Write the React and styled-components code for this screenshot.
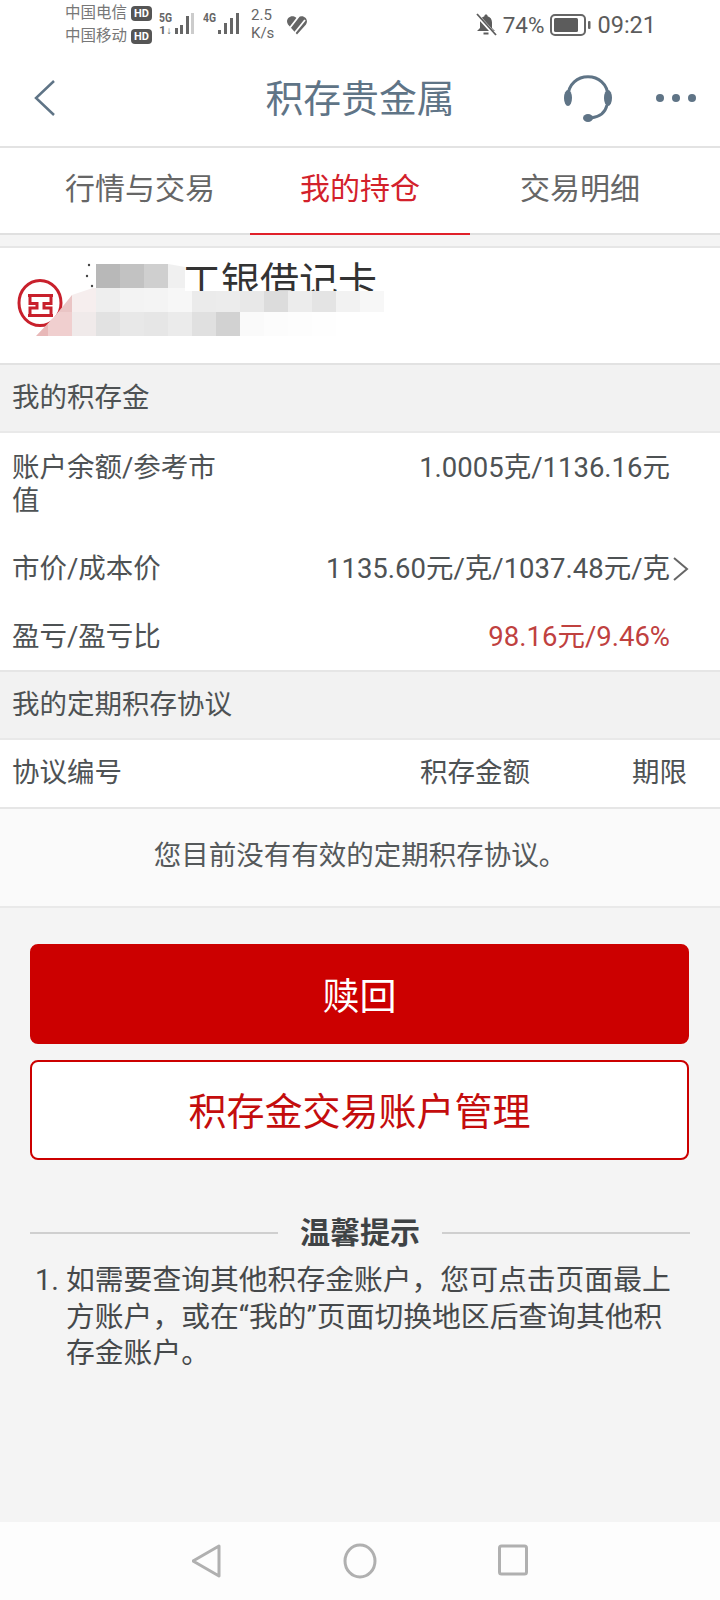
import React from 'react';
import styled, { createGlobalStyle } from 'styled-components';

const GlobalStyle = createGlobalStyle`
  html, body {
    margin: 0;
    padding: 0;
    background: #f4f4f4;
  }
  body {
    font-family: Roboto, "Noto Sans CJK SC", sans-serif;
  }
  * {
    box-sizing: border-box;
  }
`;

const Page = styled.div`
  width: 720px;
  height: 1600px;
  display: flex;
  flex-direction: column;
  overflow: hidden;
  background: #f4f4f4;
`;

const StatusBar = styled.div`
  height: 50px;
  padding: 0 64px 0 65px;
  display: flex;
  align-items: center;
  justify-content: space-between;
  background: #fff;
  color: #666;
`;

const StatusGroup = styled.div`
  display: flex;
  align-items: center;
`;

const Carriers = styled.div`
  display: flex;
  flex-direction: column;
  gap: 4px;
  margin-right: 7px;
`;

const Carrier = styled.div`
  display: flex;
  align-items: center;
  gap: 4px;
  height: 19px;
  font-size: 15.5px;
  line-height: 19px;
  color: #777;
`;

const HdBadge = styled.span`
  width: 21px;
  height: 15px;
  border-radius: 4px;
  background: #555;
  color: #fff;
  font-size: 11px;
  font-weight: 700;
  line-height: 15px;
  text-align: center;
`;

const SignalSlot = styled.div`
  display: flex;
  margin-left: ${p => p.$gap || 0}px;
`;

const Speed = styled.div`
  width: 35px;
  margin: -2px 0 0 10px;
  font-size: 15px;
  line-height: 18px;
  color: #666;
`;

const Percent = styled.span`
  margin: 0 6px;
  font-size: 22.5px;
  color: #5c5c5c;
`;

const Clock = styled.span`
  margin-left: 6px;
  font-size: 23.5px;
  color: #5c5c5c;
`;

const NavBar = styled.div`
  height: 98px;
  padding: 0 24px;
  display: grid;
  grid-template-columns: 1fr auto 1fr;
  align-items: center;
  background: #fff;
  border-bottom: 2px solid #e3e3e3;
`;

const BackSlot = styled.div`
  padding-left: 8px;
  display: flex;
`;

const NavTitle = styled.div`
  padding-top: 2px;
  font-size: 37.8px;
  line-height: 50px;
  color: #5f7486;
`;

const NavActions = styled.div`
  display: flex;
  align-items: center;
  justify-content: flex-end;
  gap: 43px;
`;

const Tabs = styled.div`
  height: 87px;
  padding: 0 30px;
  display: flex;
  background: #fff;
  border-bottom: 2px solid #e0e0e0;
`;

const Tab = styled.div`
  flex: 1;
  margin-bottom: -2px;
  padding-bottom: 9px;
  display: flex;
  align-items: center;
  justify-content: center;
  font-size: 30px;
  color: ${p => (p.$active ? '#d3212b' : '#666')};
  border-bottom: 2px solid ${p => (p.$active ? '#e0202a' : 'transparent')};
`;

const AccountCard = styled.div`
  position: relative;
  height: 119px;
  margin-top: 11px;
  padding-left: 182px;
  background: #fff;
  border-top: 2px solid #e6e6e6;
  border-bottom: 2px solid #e2e2e2;
  overflow: hidden;
`;

const AccountName = styled.div`
  height: 44px;
  margin-top: 12px;
  font-size: 39px;
  line-height: 44px;
  color: #333;
`;

const BankLogo = styled.svg`
  position: absolute;
  left: 17px;
  top: 30px;
`;

const Mosaic = styled.div`
  position: absolute;
  left: 24px;
  top: 16px;
  display: grid;
  grid-template-columns: repeat(16, 24px);
  grid-auto-rows: 24px;
  filter: blur(0.7px);
  clip-path: polygon(72px 0, 144px 0, 161px 3px, 161px 27px, 100% 27px, 100% 100%, 12px 100%, 31px 52px, 48px 31px, 72px 23px);
`;

const MosaicTile = styled.div`
  background: ${p => p.$color};
`;

const MosaicResidue = styled.svg`
  position: absolute;
  left: 84px;
  top: 14px;
`;

const SectionHeader = styled.div`
  height: 68px;
  padding: 0 0 6px 12px;
  display: flex;
  align-items: center;
  font-size: 27.5px;
  color: #4e5254;
  background: #f2f2f2;
  border-bottom: 2px solid #e9e9e9;
`;

const InfoPanel = styled.div`
  background: #fff;
  border-bottom: 2px solid #e6e6e6;
`;

const InfoRow = styled.div`
  height: ${p => p.$height}px;
  padding: ${p => p.$top}px 50px 0 12px;
  display: flex;
  justify-content: space-between;
  font-size: 27.5px;
  line-height: 33px;
  color: #4e5254;
`;

const InfoLabel = styled.div`
  width: 205px;
`;

const InfoValue = styled.div`
  position: relative;
  color: ${p => p.$color || '#4e5254'};
`;

const Chevron = styled.svg`
  position: absolute;
  left: 100%;
  top: 5px;
  margin-left: 2px;
`;

const TableHead = styled.div`
  height: 69px;
  padding: 0 0 8px 12px;
  display: grid;
  grid-template-columns: 408px 212px auto;
  align-items: center;
  font-size: 27.5px;
  color: #4e5254;
  background: #fff;
  border-bottom: 2px solid #e6e6e6;
`;

const EmptyRow = styled.div`
  height: 99px;
  padding-bottom: 10px;
  display: flex;
  align-items: center;
  justify-content: center;
  font-size: 27.5px;
  color: #55595b;
  background: #fafafa;
  border-bottom: 2px solid #e9e9e9;
`;

const Actions = styled.div`
  padding: 36px 31px 0 30px;
  display: flex;
  flex-direction: column;
  gap: 16px;
`;

const Button = styled.div`
  height: 100px;
  padding-bottom: ${p => (p.$solid ? 0 : 4)}px;
  display: flex;
  align-items: center;
  justify-content: center;
  border-radius: 8px;
  border: 2px solid #cc0000;
  background: ${p => (p.$solid ? '#cc0000' : '#fff')};
  color: ${p => (p.$solid ? '#fff' : '#c40d0d')};
  font-size: ${p => (p.$solid ? '37px' : '38px')};
`;

const Hint = styled.div`
  flex: 1;
  padding: 51px 30px 0;
`;

const HintTitle = styled.div`
  display: flex;
  align-items: center;
  gap: 22px;
  font-size: 30px;
  line-height: 44px;
  font-weight: 700;
  color: #3f4345;

  &::before,
  &::after {
    content: '';
    flex: 1;
    height: 2px;
    background: #cfcfcf;
  }
`;

const HintItem = styled.div`
  position: relative;
  margin-top: 7px;
  padding: 0 16px 0 36px;
  font-size: 28.8px;
  line-height: 36.5px;
  color: #46494b;
`;

const HintIndex = styled.span`
  position: absolute;
  left: 5px;
  top: 0;
`;

const BottomBar = styled.div`
  height: 78px;
  padding-top: 21px;
  display: flex;
  align-items: flex-start;
  justify-content: center;
  gap: 121px;
  background: #fdfdfd;
`;

const signalIcons = {
  '5G': { bars: [[16, 6], [21, 9], [27, 18]], last: [32, 21, '#ccc'], sub: '1↓' },
  '4G': { bars: [[15, 4], [21, 11], [27, 16]], last: [33, 21, '#666'] },
};

const SignalBars = ({ label }) => {
  const { bars, last, sub } = signalIcons[label];
  return (
    <svg width="38" height="28" viewBox="0 0 38 28">
      <text x="0" y="11" fontSize="12" fontWeight="700" fill="#666" fontFamily="Roboto" textLength="13" lengthAdjust="spacingAndGlyphs">{label}</text>
      {sub && <text x="0" y="23" fontSize="10" fontWeight="700" fill="#666" fontFamily="Roboto" textLength="13" lengthAdjust="spacingAndGlyphs">{sub}</text>}
      {bars.map(([x, h]) => (
        <rect key={x} x={x} y={23 - h} width="3" height={h} fill="#666" />
      ))}
      <rect x={last[0]} y={23 - last[1]} width="3" height={last[1]} fill={last[2]} />
    </svg>
  );
};

const HeartIcon = () => (
  <svg width="22" height="20" viewBox="0 0 22 20">
    <path d="M11 19.500 L2 9.500 C-1.500 4 5 -1.500 10 2.500 L11 3.500 L12 2.500 C17 -1.500 23.500 4 20 9.500 Z" fill="#666" />
    <path d="M3 14 L13 1 M8.500 18 L19 5" stroke="#fff" strokeWidth="1.800" />
  </svg>
);

const BellIcon = () => (
  <svg width="22" height="24" viewBox="0 0 22 24">
    <path d="M11 1.500c-1 0-1.600.7-1.600 1.700C6.400 4 5 6.500 5 9.500V15l-3 3h18l-3-3V9.500c0-3-1.400-5.500-4.400-6.300 0-1-.6-1.700-1.600-1.700z" fill="#5c5c5c" />
    <path d="M8.500 20.500h5" stroke="#5c5c5c" strokeWidth="2" />
    <path d="M2 2l18 20" stroke="#fff" strokeWidth="3.500" />
    <path d="M2 1l19 21" stroke="#5c5c5c" strokeWidth="1.800" />
  </svg>
);

const BatteryIcon = () => (
  <svg width="41" height="22" viewBox="0 0 41 22">
    <rect x="1" y="1" width="34" height="20" rx="4" fill="none" stroke="#666" strokeWidth="2" />
    <rect x="4" y="4" width="24" height="14" rx="1.500" fill="#5c5c5c" />
    <rect x="38" y="7" width="2.500" height="8" rx="1" fill="#666" />
  </svg>
);

const BackIcon = () => (
  <svg width="24" height="38" viewBox="0 0 24 38">
    <path d="M22 2 L4 19 L22 36" fill="none" stroke="#5f7486" strokeWidth="2.500" />
  </svg>
);

const HeadsetIcon = () => (
  <svg width="50" height="50" viewBox="0 0 50 50">
    <path d="M5 24 C5 -3 45 -3 45 24" fill="none" stroke="#5f7486" strokeWidth="3" />
    <ellipse cx="5" cy="25" rx="4" ry="8" fill="#5f7486" />
    <ellipse cx="45" cy="25" rx="4" ry="8" fill="#5f7486" />
    <path d="M44 32 C42 41 36 44 28 45" fill="none" stroke="#5f7486" strokeWidth="3" />
    <ellipse cx="25" cy="45" rx="5" ry="4" fill="#5f7486" />
  </svg>
);

const MoreIcon = () => (
  <svg width="40" height="10" viewBox="0 0 40 10">
    <circle cx="4" cy="5" r="4" fill="#5f7486" />
    <circle cx="20" cy="5" r="4" fill="#5f7486" />
    <circle cx="36" cy="5" r="4" fill="#5f7486" />
  </svg>
);

const IcbcLogo = () => (
  <BankLogo width="46" height="50" viewBox="0 0 46 50">
    <ellipse cx="23" cy="25" rx="21" ry="22.500" fill="none" stroke="#c8202c" strokeWidth="3" />
    <path d="M11 17.500H36M11 37.500H36M13 17.500V25.500H20V30H13V37.500M34 17.500V25.500H27V30H34V37.500" fill="none" stroke="#c8202c" strokeWidth="3" />
  </BankLogo>
);

const mosaicRows = [
  [null, null, null, '#b8b8b8', '#c2c2c2', '#cfcfcf', '#f0f0f0'],
  [null, '#eac5c5', '#f6eeee', '#eeeeee', '#f3f3f3', '#f4f4f4', '#f7f7f7', '#ebebeb', '#ececec', '#e8e8e8', '#dcdcdc', '#ececec', '#e4e4e4', '#f2f2f2', '#f7f7f7'],
  ['#e8b8b8', '#f0cfcf', '#f0eaea', '#e2e2e2', '#e8e8e8', '#e6e6e6', '#ebebeb', '#e0e0e0', '#d2d2d2', '#fafafa', '#fcfcfc', '#fdfdfd', '#fefefe'],
];

const BlurPatch = () => (
  <Mosaic>
    {mosaicRows.flatMap((row, r) =>
      Array.from({ length: 16 }, (_, c) => (
        <MosaicTile key={`${r}-${c}`} $color={row[c] || 'transparent'} />
      )),
    )}
  </Mosaic>
);

const App = () => (
  <Page>
    <GlobalStyle />
    <StatusBar>
      <StatusGroup>
        <Carriers>
          <Carrier>中国电信<HdBadge>HD</HdBadge></Carrier>
          <Carrier>中国移动<HdBadge>HD</HdBadge></Carrier>
        </Carriers>
        <SignalSlot><SignalBars label="5G" /></SignalSlot>
        <SignalSlot $gap={6}><SignalBars label="4G" /></SignalSlot>
        <Speed>2.5<br />K/s</Speed>
        <HeartIcon />
      </StatusGroup>
      <StatusGroup>
        <BellIcon />
        <Percent>74%</Percent>
        <BatteryIcon />
        <Clock>09:21</Clock>
      </StatusGroup>
    </StatusBar>

    <NavBar>
      <BackSlot><BackIcon /></BackSlot>
      <NavTitle>积存贵金属</NavTitle>
      <NavActions>
        <HeadsetIcon />
        <MoreIcon />
      </NavActions>
    </NavBar>

    <Tabs>
      <Tab>行情与交易</Tab>
      <Tab $active>我的持仓</Tab>
      <Tab>交易明细</Tab>
    </Tabs>

    <AccountCard>
      <AccountName>工银借记卡</AccountName>
      <IcbcLogo />
      <BlurPatch />
      <MosaicResidue width="12" height="28" viewBox="0 0 12 28">
        <circle cx="5" cy="3" r="1.200" fill="#444" />
        <circle cx="3" cy="14" r="1.200" fill="#444" />
        <circle cx="8" cy="24" r="1.200" fill="#444" />
      </MosaicResidue>
    </AccountCard>

    <SectionHeader>我的积存金</SectionHeader>
    <InfoPanel>
      <InfoRow $height={102} $top={18}>
        <InfoLabel>账户余额/参考市值</InfoLabel>
        <InfoValue>1.0005克/1136.16元</InfoValue>
      </InfoRow>
      <InfoRow $height={68} $top={17}>
        <InfoLabel>市价/成本价</InfoLabel>
        <InfoValue>
          1135.60元/克/1037.48元/克
          <Chevron width="17" height="24" viewBox="0 0 17 24">
            <path d="M2 1 L15 12 L2 23" fill="none" stroke="#666" strokeWidth="2" />
          </Chevron>
        </InfoValue>
      </InfoRow>
      <InfoRow $height={67} $top={17}>
        <InfoLabel>盈亏/盈亏比</InfoLabel>
        <InfoValue $color="#c0413f">98.16元/9.46%</InfoValue>
      </InfoRow>
    </InfoPanel>

    <SectionHeader>我的定期积存协议</SectionHeader>
    <TableHead>
      <span>协议编号</span>
      <span>积存金额</span>
      <span>期限</span>
    </TableHead>
    <EmptyRow>您目前没有有效的定期积存协议。</EmptyRow>

    <Actions>
      <Button $solid>赎回</Button>
      <Button>积存金交易账户管理</Button>
    </Actions>

    <Hint>
      <HintTitle>温馨提示</HintTitle>
      <HintItem>
        <HintIndex>1.</HintIndex>
        如需要查询其他积存金账户，您可点击页面最上方账户，或在“我的”页面切换地区后查询其他积存金账户。
      </HintItem>
    </Hint>

    <BottomBar>
      <svg width="30" height="36" viewBox="0 0 30 36">
        <path d="M27 3 L1 18 L27 33 Z" fill="none" stroke="#b0b0b0" strokeWidth="3" strokeLinejoin="round" />
      </svg>
      <svg width="34" height="36" viewBox="0 0 34 36">
        <ellipse cx="17" cy="18" rx="15" ry="16" fill="none" stroke="#b0b0b0" strokeWidth="3" />
      </svg>
      <svg width="30" height="34" viewBox="0 0 30 34">
        <rect x="1.500" y="3" width="27" height="28" rx="2" fill="none" stroke="#b0b0b0" strokeWidth="3" />
      </svg>
    </BottomBar>
  </Page>
);

export default App;
